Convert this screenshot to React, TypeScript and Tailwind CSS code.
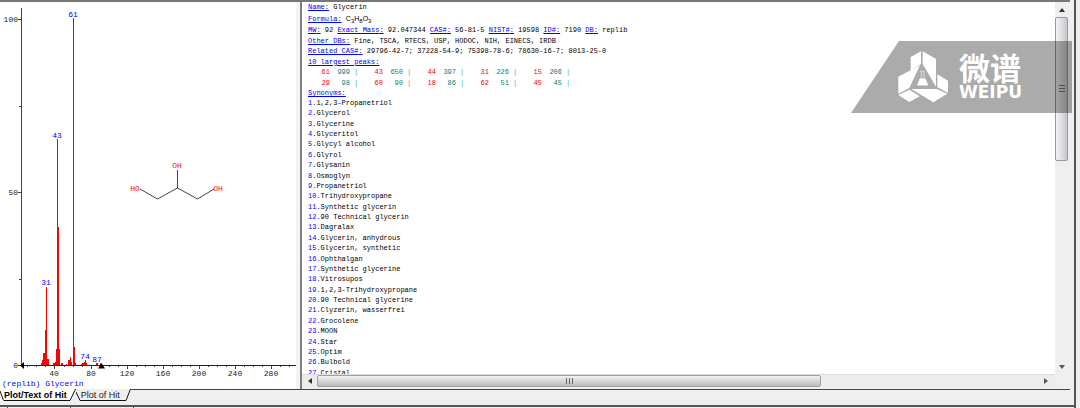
const peaks: [number, number][] = [
  [25, 0.5], [26, 1.5], [27, 3.5], [28, 3.5], [29, 10], [30, 1.8], [31, 22.6], [32, 1.8], [33, 1.8],
  [38, 0.5], [40, 0.5], [41, 1], [42, 4.5], [43, 65], [44, 39.7], [45, 4.5], [47, 0.7], [48, 0.5],
  [53, 0.4], [55, 1.5], [56, 1.5], [57, 2.3], [58, 1], [60, 9.2], [61, 100], [62, 5.2], [63, 0.6],
  [69, 0.4], [71, 0.6], [72, 0.5], [73, 1], [74, 1.4], [75, 0.5], [86, 0.5], [87, 0.7], [91, 0.5],
];

const peakLabels = [
  { text: '61', x: 73, y: 17 },
  { text: '43', x: 57, y: 138 },
  { text: '31', x: 46, y: 285 },
  { text: '74', x: 85, y: 359 },
  { text: '87', x: 97, y: 362 },
];

const largest = [
  [['61', '999'], ['43', '650'], ['44', '397'], ['31', '226'], ['15', '206']],
  [['29', '98'], ['60', '90'], ['18', '86'], ['62', '51'], ['45', '45']],
];

const synonyms = [
  '1,2,3-Propanetriol', 'Glycerol', 'Glycerine', 'Glyceritol', 'Glycyl alcohol', 'Glyrol', 'Glysanin',
  'Osmoglyn', 'Propanetriol', 'Trihydroxypropane', 'Synthetic glycerin', '90 Technical glycerin',
  'Dagralax', 'Glycerin, anhydrous', 'Glycerin, synthetic', 'Ophthalgan', 'Synthetic glycerine',
  'Vitrosupos', '1,2,3-Trihydroxypropane', '90 Technical glycerine', 'Clyzerin, wasserfrei',
  'Grocolene', 'MOON', 'Star', 'Optim', 'Bulbold', 'Cristal',
];

// m/z to horizontal chart position
const mzX = (mz: number) => Math.round(18.4 + mz * 0.902);

const minorTicks = Array.from({ length: 30 }, (_, i) => (i + 1) * 10);
const majorTicks = [40, 80, 120, 160, 200, 240, 280];

function Spectrum() {
  return (
    <svg viewBox="0 2 296 376" width="296" height="376" className="block font-['Liberation_Mono',monospace] text-[8px]">
      <g stroke="#444" strokeWidth="1" shapeRendering="crispEdges">
        <path d="M21.5 8V366M18 19.5h3M18 192.5h3M18 365.5h3M19 106.5h2M19 279.5h2" />
        <path d="M21 365.5H296" stroke="#222" />
        {minorTicks.map((mz) => (
          <path key={mz} d={`M${mzX(mz) + 0.5} 366v${mz % 40 === 0 ? 3 : 1}`} />
        ))}
      </g>
      <g fill="#ff0000">
        {peaks.map(([mz, value]) => {
          const h = Math.round(value * 3.47);
          return <rect key={mz} x={mzX(mz)} y={365 - h} width="1" height={h} />;
        })}
      </g>
      <path d="M20 365.500L24 362V369ZM98 368.500L101.500 363L105 368.500Z" fill="#000" />
      <g fill="#222">
        <text x="18" y="22" textAnchor="end">100</text>
        <text x="18" y="195" textAnchor="end">50</text>
        <text x="18" y="368" textAnchor="end">0</text>
        {majorTicks.map((mz) => (
          <text key={mz} x={mzX(mz)} y="376" textAnchor="middle">{mz}</text>
        ))}
      </g>
      <g fill="#0000ff" textAnchor="middle">
        {peakLabels.map((l) => (
          <text key={l.text} x={l.x} y={l.y}>{l.text}</text>
        ))}
      </g>
      <path d="M140 189L157.500 199L177.500 188L197.500 199L214 189M177.500 188V170" fill="none" stroke="#444" />
      <g fill="#ff0000" textAnchor="middle">
        <text x="135" y="191">HO</text>
        <text x="177" y="168">OH</text>
        <text x="218" y="191">OH</text>
      </g>
    </svg>
  );
}

function Field({ label, value }: { label: string; value: string }) {
  return (
    <>
      <span className="text-[#0000ff] underline">{label}:</span> {value}{' '}
    </>
  );
}

function HitText() {
  return (
    <div className="min-w-0 flex-1 overflow-hidden whitespace-nowrap bg-white pl-1.5 font-['Liberation_Mono',monospace] text-[7px] leading-[10px] text-black">
      <p className="h-[11px] leading-[11px]"><Field label="Name" value="Glycerin" /></p>
      <p className="h-3 leading-[11px]">
        <span className="text-[#0000ff] underline">Formula:</span>{' '}
        <span className="font-['Liberation_Sans',sans-serif]">
          C<sub className="text-[6px]">3</sub>H<sub className="text-[6px]">8</sub>O<sub className="text-[6px]">3</sub>
        </span>
      </p>
      <div className="grid h-[42px] auto-rows-fr">
        <p>
          <Field label="MW" value="92" />
          <Field label="Exact Mass" value="92.047344" />
          <Field label="CAS#" value="56-81-5" />
          <Field label="NIST#" value="19598" />
          <Field label="ID#" value="7190" />
          <Field label="DB" value="replib" />
        </p>
        <p><Field label="Other DBs" value="Fine, TSCA, RTECS, USP, HODOC, NIH, EINECS, IRDB" /></p>
        <p><Field label="Related CAS#" value="29796-42-7; 37228-54-9; 75398-78-6; 78630-16-7; 8013-25-0" /></p>
        <p className="text-[#0000ff] underline">10 largest peaks:</p>
      </div>
      <table className="h-[21px] table-fixed border-collapse text-right">
        <tbody>
          {largest.map((row, i) => (
            <tr key={i}>
              {row.map(([mz, value]) => [
                <td key={mz} className="w-[22px] p-0 text-[#ff0000]">{mz}</td>,
                <td key={mz + 'v'} className="w-5 p-0 text-[#008080]">{value}</td>,
                <td key={mz + 'b'} className="w-[11px] p-0 pl-1 text-left text-[#3fb0bc]">|</td>,
              ])}
            </tr>
          ))}
        </tbody>
      </table>
      <p className="text-[#0000ff] underline">Synonyms:</p>
      <ol className="grid h-[280px] auto-rows-fr">
        {synonyms.map((name, i) => (
          <li key={i}><span className="text-[#0000ff]">{i + 1}.</span>{name}</li>
        ))}
      </ol>
    </div>
  );
}

function VerticalScrollbar() {
  return (
    <div className="flex w-[13px] shrink-0 flex-col bg-[#efefef]">
      <button aria-label="Scroll up" className="flex h-[15px] items-center justify-center">
        <svg width="6" height="4"><path d="M3 0L6 4H0Z" fill="#333" /></svg>
      </button>
      <div className="min-h-0 flex-1">
        <div className="flex h-[42%] flex-col items-center justify-center gap-0.5 rounded-xs border border-[#999] bg-linear-to-r from-[#f3f3f3] via-[#dedfe2] to-[#c6c7cb]">
          <i className="h-px w-1.5 bg-[#777]" />
          <i className="h-px w-1.5 bg-[#777]" />
          <i className="h-px w-1.5 bg-[#777]" />
        </div>
      </div>
      <button aria-label="Scroll down" className="flex h-[15px] items-center justify-center">
        <svg width="6" height="4"><path d="M0 0H6L3 4Z" fill="#555" /></svg>
      </button>
    </div>
  );
}

function HorizontalScrollbar() {
  return (
    <div className="mr-[13px] flex h-[13px] shrink-0 border-t border-[#ddd] bg-[#ececec]">
      <button aria-label="Scroll left" className="flex w-[15px] items-center justify-center">
        <svg width="4" height="6"><path d="M4 0V6L0 3Z" fill="#333" /></svg>
      </button>
      <div className="min-w-0 flex-1">
        <div className="flex h-full w-[70%] items-center justify-center gap-0.5 rounded-xs border border-[#a0a0a0] bg-linear-to-b from-[#f3f3f3] via-[#d6d7d9] to-[#bdbec1]">
          <i className="h-1.5 w-px bg-[#666]" />
          <i className="h-1.5 w-px bg-[#666]" />
          <i className="h-1.5 w-px bg-[#666]" />
        </div>
      </div>
      <button aria-label="Scroll right" className="flex w-[18px] items-center justify-center">
        <svg width="4" height="6"><path d="M0 0V6L4 3Z" fill="#555" /></svg>
      </button>
    </div>
  );
}

function Watermark() {
  return (
    <svg viewBox="0 0 221 72" className="pointer-events-none absolute top-[41px] right-0.5 w-[221px]">
      <path d="M48 0H221V72H0Z" fill="#000" fillOpacity="0.33" />
      <g transform="translate(39 1) scale(0.3333)" fill="#fff">
        <path d="M62 45L93 28V66L62 86Z" />
        <path d="M98 28L138 51V134L98 66Z" />
        <path d="M25 104L90 70L58 138L25 155Z" />
        <path d="M142 97L174 116V152L142 136Z" />
        <path d="M64 141H140L172 155L130 181Z" />
        <path d="M25 159L58 143L89 163L58 180Z" />
        <path d="M90 88H105M94 90V104L83 129H113L102 104V90" fill="none" stroke="#ddd" strokeWidth="3" />
        <path d="M88 112L99 108L108 113L114 130H82Z" />
      </g>
      <text x="108" y="39" fill="#fff" className="font-['Noto_Sans_CJK_SC',sans-serif] text-[31px] font-bold">微谱</text>
      <text x="108" y="57" fill="#fff" className="font-['DejaVu_Sans',sans-serif] text-[17px] font-bold">WEIPU</text>
    </svg>
  );
}

function Tabs() {
  return (
    <div role="tablist" className="flex h-4 shrink-0 items-start font-['Liberation_Sans',sans-serif] text-[9px] leading-3">
      <div className="flex h-3 bg-white">
        <svg width="4" height="12"><path d="M0 2L3.500 11.500" stroke="#111" fill="none" /></svg>
        <button role="tab" aria-selected="true" className="h-3 border-b border-[#111] pr-0.5 font-bold text-black">Plot/Text of Hit</button>
        <svg width="7" height="12">
          <path d="M1 12L7 0V12Z" fill="#efefef" />
          <path d="M0 11.500H1L6.500 0" stroke="#111" fill="none" />
        </svg>
      </div>
      <svg width="5" height="12"><path d="M0 3L4 11.500H5" stroke="#111" fill="none" /></svg>
      <button role="tab" aria-selected="false" className="h-3 border-b border-[#111] pr-0.5 text-[#222]">Plot of Hit</button>
      <svg width="9" height="12"><path d="M0 11.500H4L8.500 0" stroke="#111" fill="none" /></svg>
      <div className="-ml-px flex-1 border-t border-[#444]" />
    </div>
  );
}

export default function App() {
  return (
    <div className="h-screen bg-[#efefef] pr-1">
      <div className="relative flex h-full flex-col border-r-2 border-[#555]">
        <div className="mr-1 flex min-h-0 flex-1 flex-col border-t-2 border-[#777]">
          <div className="flex min-h-0 flex-1">
            <section className="w-[300px] shrink-0 overflow-hidden border-r-4 border-[#f3f3f3] bg-white">
              <Spectrum />
              <p className="pl-0.5 font-['Liberation_Mono',monospace] text-[8px] leading-[11px] text-[#0000ff]">(replib) Glycerin</p>
            </section>
            <section className="flex min-w-0 flex-1 flex-col border-l-2 border-[#808080] pr-0.5 pb-0.5">
              <div className="flex min-h-0 flex-1">
                <HitText />
                <VerticalScrollbar />
              </div>
              <HorizontalScrollbar />
            </section>
          </div>
          <Tabs />
        </div>
        <div className="flex h-[3px] shrink-0 border-t-2 border-[#555]">
          <i className="w-2 border-r border-[#555]" />
          <i className="w-[63px] border-r border-[#555]" />
          <i className="w-[63px] border-r border-[#555]" />
        </div>
        <Watermark />
      </div>
    </div>
  );
}
